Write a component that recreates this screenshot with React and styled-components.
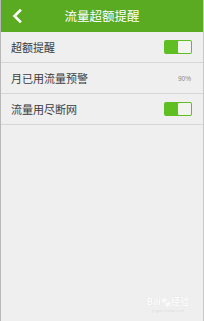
import React from 'react'
import styled, { createGlobalStyle } from 'styled-components'

const GlobalStyle = createGlobalStyle`
  html, body {
    margin: 0;
    padding: 0;
    background: #efefef;
  }
  body {
    font-family: "Noto Sans CJK SC", "Liberation Sans", sans-serif;
  }
`;

const rows = [
  { label: '超额提醒', type: 'toggle' },
  { label: '月已用流量预警', type: 'value', value: '90%' },
  { label: '流量用尽断网', type: 'toggle' },
];

export default function App() {
  return (
    <>
      <GlobalStyle />
      <Screen>
        <Header>
          <BackButton>
            <svg width="10" height="14" viewBox="0 0 10 14">
              <path d="M8 1.5 L2.5 7 L8 12.5" fill="none" stroke="#fff" strokeWidth="2.6" strokeLinecap="square" />
            </svg>
          </BackButton>
          <Title>流量超额提醒</Title>
        </Header>
        <List>
          {rows.map((row) => (
            <Row key={row.label}>
              <Label>{row.label}</Label>
              {row.type === 'toggle' ? (
                <Toggle>
                  <Knob />
                </Toggle>
              ) : (
                <Value>{row.value}</Value>
              )}
            </Row>
          ))}
        </List>
        <Filler>
          <Watermark>
            <WmMain>Bai<Paw>🐾</Paw>经验</WmMain>
            <WmSub>jingyan.baidu.com</WmSub>
          </Watermark>
        </Filler>
      </Screen>
    </>
  );
}

const Screen = styled.div`
  width: 204px;
  height: 321px;
  display: flex;
  flex-direction: column;
  background: #efefef;
  box-sizing: border-box;
  border-left: 1px solid #b8b8b8;
  border-right: 1px solid #c8c8c8;
  overflow: hidden;
`;

const Header = styled.div`
  height: 32px;
  flex-shrink: 0;
  background: #5aaa22;
  display: flex;
  align-items: center;
  position: relative;
`;

const BackButton = styled.div`
  width: 30px;
  height: 32px;
  display: flex;
  align-items: center;
  justify-content: center;
  margin-left: 1px;
`;

const Title = styled.div`
  position: absolute;
  left: 0;
  right: 0;
  text-align: center;
  color: #fff;
  font-size: 12.5px;
  line-height: 32px;
  pointer-events: none;
`;

const List = styled.div`
  display: flex;
  flex-direction: column;
`;

const Row = styled.div`
  height: 30px;
  padding: 0 11px 0 10px;
  display: flex;
  align-items: center;
  justify-content: space-between;
  border-bottom: 1px solid #d6d6d6;
`;

const Label = styled.div`
  font-size: 11px;
  color: #3c3c3c;
`;

const Value = styled.div`
  font-size: 6.5px;
  color: #888;
  font-family: "Liberation Sans", sans-serif;
  margin-right: 1px;
`;

const Toggle = styled.div`
  width: 28px;
  height: 14px;
  box-sizing: border-box;
  background: #5fbf22;
  border-radius: 2px;
  padding: 1px;
  display: flex;
  justify-content: flex-end;
`;

const Knob = styled.div`
  width: 13px;
  height: 12px;
  background: #f2f5ee;
  border-radius: 1px;
`;

const Filler = styled.div`
  flex: 1;
  display: flex;
  align-items: flex-end;
  justify-content: flex-end;
  padding: 0 14px 8px 0;
`;

const Watermark = styled.div`
  display: flex;
  flex-direction: column;
  align-items: center;
  opacity: 0.9;
`;

const WmMain = styled.div`
  font-size: 9px;
  color: #ffffff;
  font-weight: bold;
  text-shadow: 0 0 1px #cfcfcf;
  display: flex;
  align-items: center;
`;

const Paw = styled.span`
  font-size: 8px;
  filter: grayscale(1) brightness(2.5);
`;

const WmSub = styled.div`
  font-size: 4px;
  color: #dcdcdc;
  font-family: "Liberation Sans", sans-serif;
`;
